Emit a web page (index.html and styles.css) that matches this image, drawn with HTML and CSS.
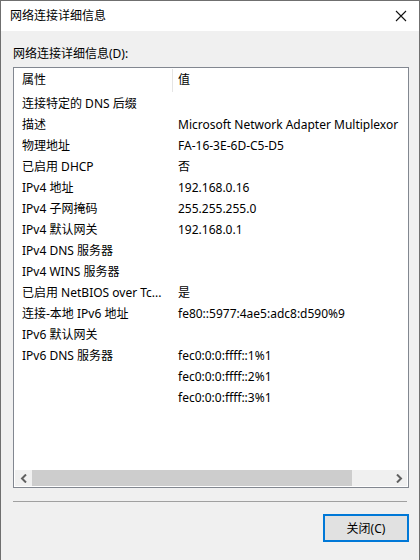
FILE: index.html
```html
<!DOCTYPE html>
<html lang="zh-CN">
<head>
<meta charset="utf-8">
<title>网络连接详细信息</title>
<link rel="stylesheet" href="styles.css">
</head>
<body>
<div class="window">
  <div class="titlebar">
    <span class="title">网络连接详细信息</span>
    <span class="close">
      <svg width="12" height="12" viewBox="0 0 12 12"><path d="M1 1 L11 11 M11 1 L1 11" stroke="#111" stroke-width="1.1" fill="none"/></svg>
    </span>
  </div>
  <div class="body">
    <div class="label">网络连接详细信息(D):</div>
    <div class="listbox">
      <div class="grid">
        <div class="hcell">属性</div><div class="hcell sep">值</div>
        <div class="cell">连接特定的 DNS 后缀</div><div class="cell v"></div>
        <div class="cell">描述</div><div class="cell v">Microsoft Network Adapter Multiplexor</div>
        <div class="cell">物理地址</div><div class="cell v">FA-16-3E-6D-C5-D5</div>
        <div class="cell">已启用 DHCP</div><div class="cell v">否</div>
        <div class="cell">IPv4 地址</div><div class="cell v">192.168.0.16</div>
        <div class="cell">IPv4 子网掩码</div><div class="cell v">255.255.255.0</div>
        <div class="cell">IPv4 默认网关</div><div class="cell v">192.168.0.1</div>
        <div class="cell">IPv4 DNS 服务器</div><div class="cell v"></div>
        <div class="cell">IPv4 WINS 服务器</div><div class="cell v"></div>
        <div class="cell">已启用 NetBIOS over Tc...</div><div class="cell v">是</div>
        <div class="cell">连接-本地 IPv6 地址</div><div class="cell v">fe80::5977:4ae5:adc8:d590%9</div>
        <div class="cell">IPv6 默认网关</div><div class="cell v"></div>
        <div class="cell">IPv6 DNS 服务器</div><div class="cell v">fec0:0:0:ffff::1%1</div>
        <div class="cell"></div><div class="cell v">fec0:0:0:ffff::2%1</div>
        <div class="cell"></div><div class="cell v">fec0:0:0:ffff::3%1</div>
      </div>
      <div class="hscroll">
        <div class="arrow">
          <svg width="8" height="9" viewBox="0 0 8 9"><path d="M6 0.5 L2 4.5 L6 8.5" stroke="#606060" stroke-width="2" fill="none"/></svg>
        </div>
        <div class="thumb"></div>
        <div class="track"></div>
        <div class="arrow">
          <svg width="8" height="9" viewBox="0 0 8 9"><path d="M2 0.5 L6 4.5 L2 8.5" stroke="#606060" stroke-width="2" fill="none"/></svg>
        </div>
      </div>
    </div>
    <div class="divider"></div>
    <div class="actions">
      <button class="btn">关闭(C)</button>
    </div>
  </div>
</div>
</body>
</html>
```
FILE: styles.css
```css
html, body {
  margin: 0;
  padding: 0;
  background: #f0f0f0;
}
body {
  font-family: "Noto Sans", "Noto Sans CJK SC", sans-serif;
  font-size: 12px;
  color: #000;
}
.window {
  width: 420px;
  height: 560px;
  box-sizing: border-box;
  border: 1px solid #6f6f6f;
  border-bottom: none;
  background: #f0f0f0;
  display: flex;
  flex-direction: column;
}
.titlebar {
  height: 30px;
  flex: none;
  background: #fff;
  display: flex;
  align-items: center;
  justify-content: space-between;
  padding: 0 10px 0 9px;
}
.title {
  font-size: 12px;
  line-height: 16px;
}
.close {
  display: flex;
  width: 12px;
  height: 12px;
  margin-right: 2px;
}
.body {
  padding: 15px 10px 0 12px;
  display: flex;
  flex-direction: column;
}
.label {
  height: 16px;
  line-height: 16px;
  margin-bottom: 5px;
}
.listbox {
  height: 421px;
  box-sizing: border-box;
  border: 1px solid #828790;
  background: #fff;
  display: flex;
  flex-direction: column;
  padding: 0 1px 1px 1px;
  overflow: hidden;
}
.grid {
  flex: 1;
  display: grid;
  grid-template-columns: 157px 1fr;
  grid-template-rows: 25px;
  grid-auto-rows: 21px;
  align-content: start;
  overflow: hidden;
}
.hcell {
  grid-row: 1;
  line-height: 24px;
  padding-left: 7px;
  white-space: nowrap;
  overflow: hidden;
}
.hcell.sep {
  border-left: 1px solid #e5e5e5;
  padding-left: 5px;
  margin-top: 1px;
  height: 23px;
  line-height: 22px;
}
.cell {
  line-height: 21px;
  padding-left: 7px;
  white-space: nowrap;
  overflow: hidden;
}
.cell.v {
  padding-left: 6px;
}
.hscroll {
  height: 16px;
  flex: none;
  display: flex;
  background: #f0f0f0;
}
.arrow {
  width: 17px;
  flex: none;
  display: flex;
  align-items: center;
  justify-content: center;
}
.thumb {
  width: 320px;
  flex: none;
  background: #cdcdcd;
}
.track {
  flex: 1;
}
.divider {
  height: 1px;
  background: #a0a0a0;
  margin: 13px 2px 0 0;
}
.actions {
  display: flex;
  justify-content: flex-end;
  padding-top: 12px;
}
.btn {
  width: 86px;
  height: 28px;
  box-sizing: border-box;
  border: 2px solid #0078d7;
  background: #e1e1e1;
  font-family: "Noto Sans", "Noto Sans CJK SC", sans-serif;
  font-size: 12px;
  color: #000;
  padding: 0;
  margin: 0;
}
```
